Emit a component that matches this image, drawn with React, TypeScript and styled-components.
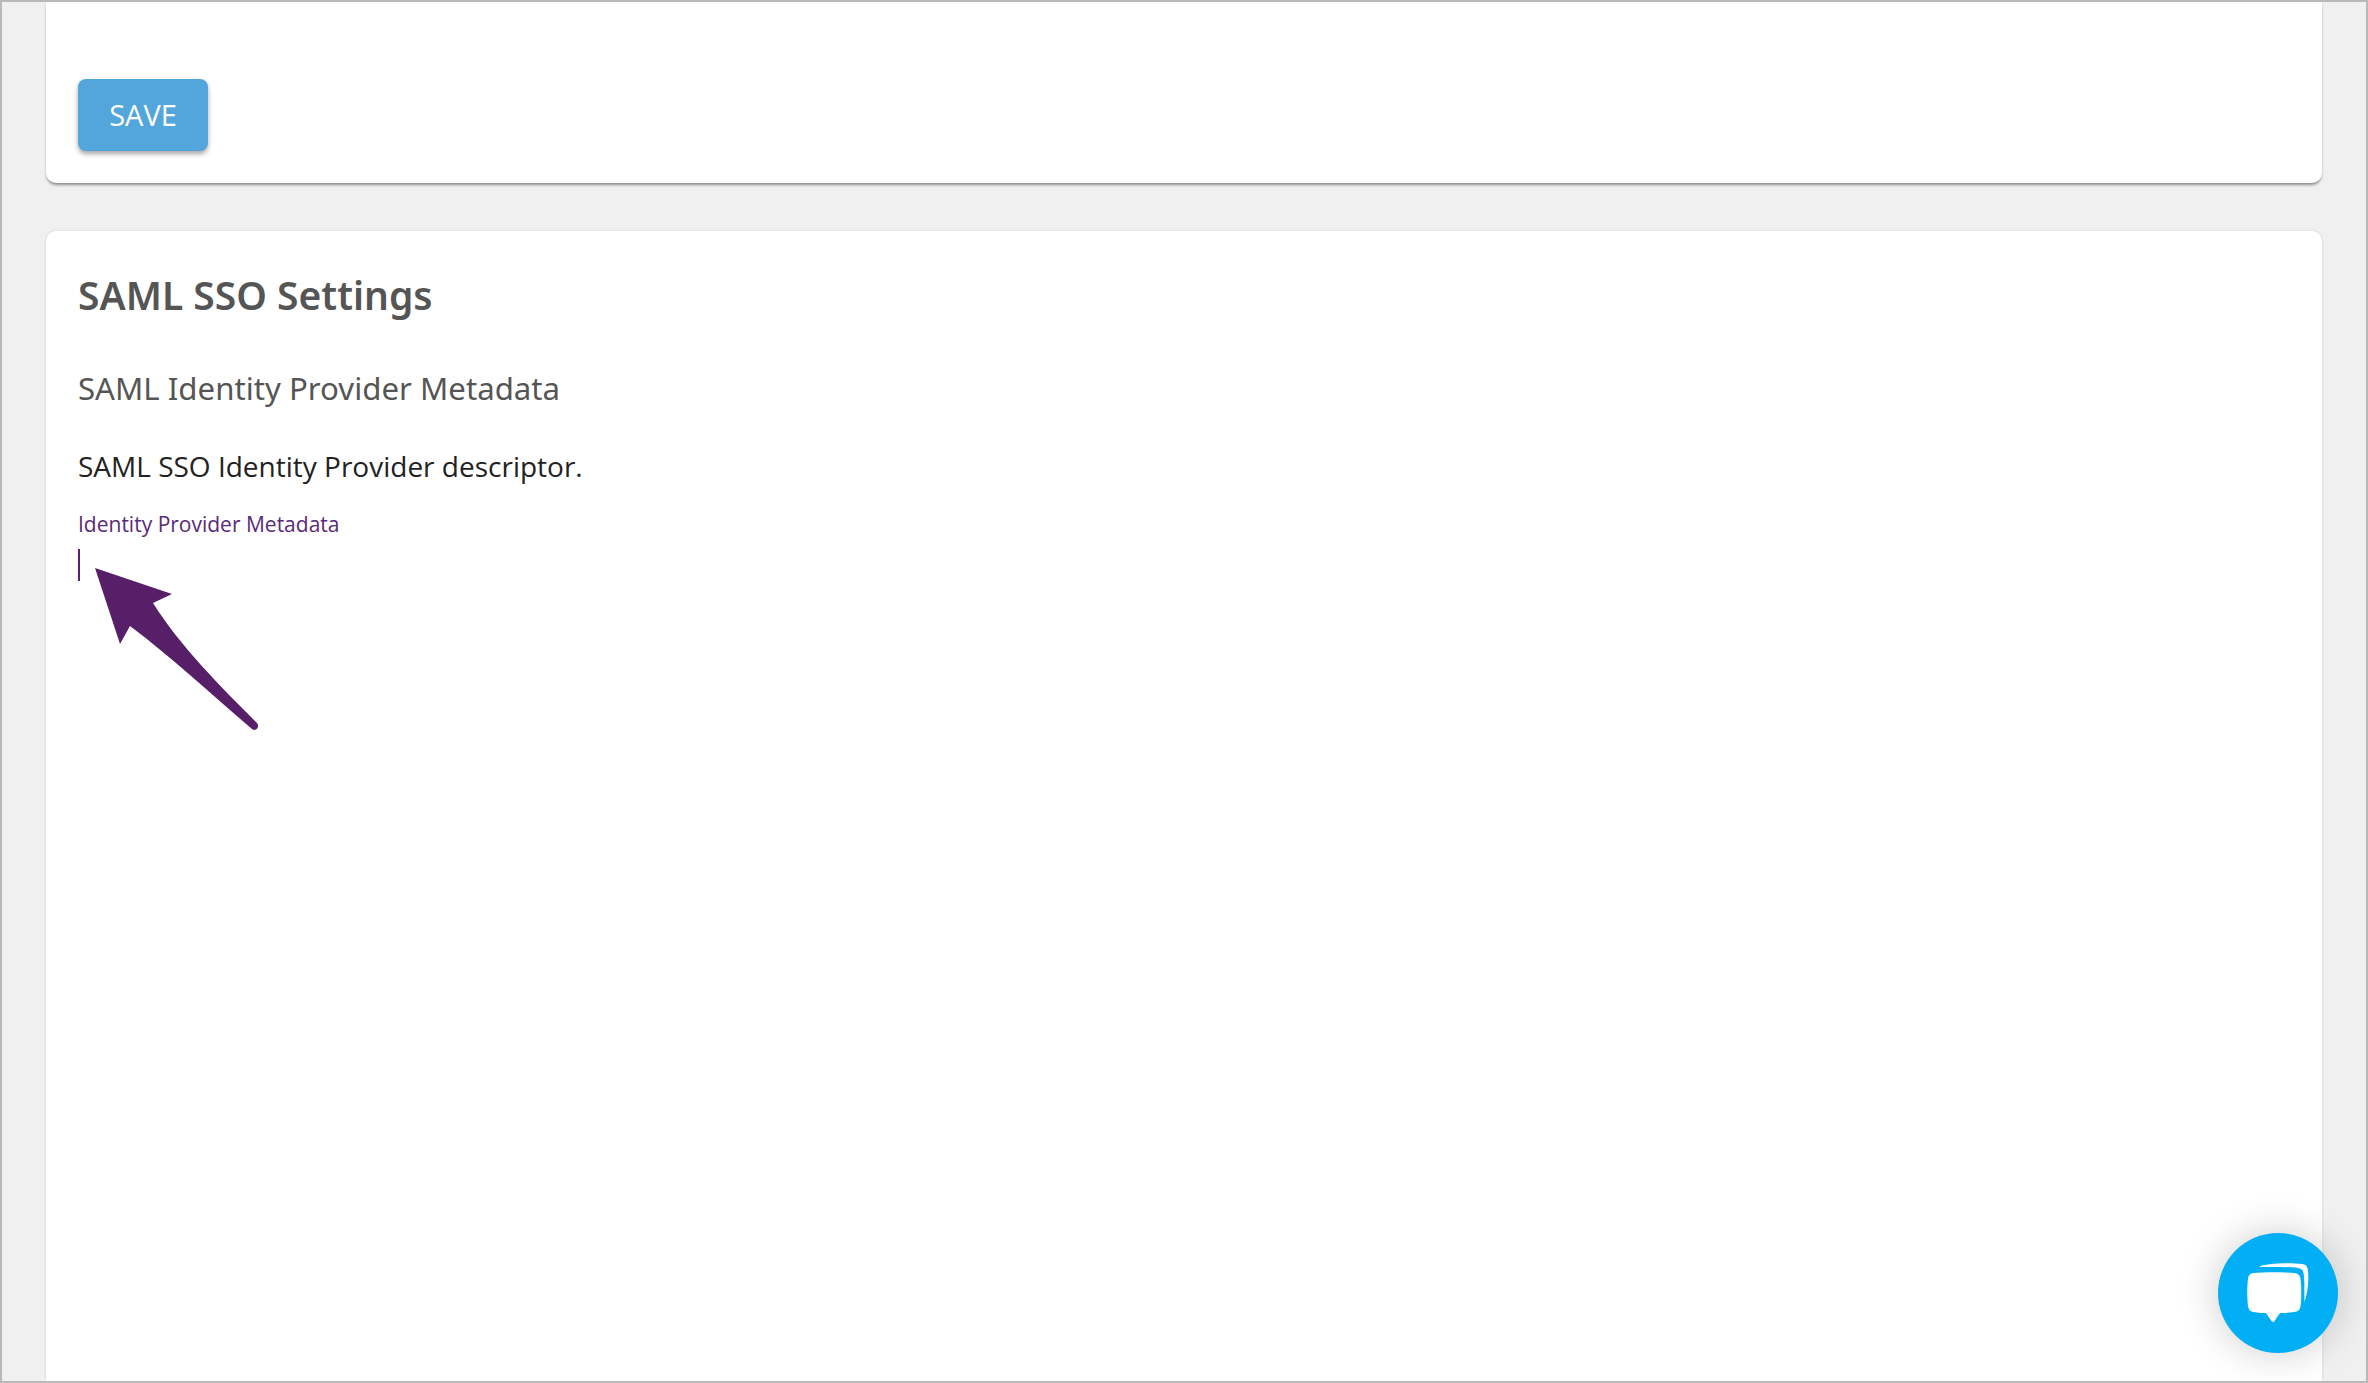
import React from "react";
import styled, { createGlobalStyle } from "styled-components";

const GlobalStyle = createGlobalStyle`
  html, body {
    margin: 0;
    padding: 0;
    height: 100%;
    overflow: hidden;
  }
  body {
    font-family: "Open Sans", "Noto Sans", sans-serif;
  }
`;

const Frame = styled.div`
  position: relative;
  box-sizing: border-box;
  width: 2368px;
  height: 1383px;
  border: 2px solid #b9b9b9;
  background: #f0f0f0;
  overflow: hidden;
  display: flex;
  flex-direction: column;
  gap: 48px;
  padding: 0 44px;
`;

const Card = styled.section`
  position: relative;
  background: #fff;
  padding: 0 32px;
`;

const SaveCard = styled(Card)`
  height: 181px;
  flex: none;
  padding-top: 77px;
  box-sizing: border-box;
  border-radius: 0 0 10px 10px;
  box-shadow: 0 3px 3px -1px rgba(0, 0, 0, 0.4), 0 0 3px rgba(0, 0, 0, 0.1);
`;

const SettingsCard = styled(Card)`
  flex: 1;
  padding-top: 40px;
  border-radius: 10px 10px 0 0;
  box-shadow: 0 0 3px rgba(0, 0, 0, 0.12);
`;

const SaveButton = styled.button`
  display: block;
  width: 130px;
  height: 72px;
  border: 0;
  border-radius: 8px;
  background: #53a6dc;
  color: #fff;
  font-family: "Open Sans", sans-serif;
  font-size: 29px;
  box-shadow: 0 3px 5px rgba(0, 0, 0, 0.35);
  padding: 0 0 2px;
`;

const Title = styled.h2`
  margin: 0;
  font-family: "Noto Sans", sans-serif;
  font-size: 39px;
  line-height: 48px;
  font-weight: 600;
  color: #555;
`;

const Subtitle = styled.h3`
  margin: 48px 0 0;
  font-family: "Noto Sans", sans-serif;
  font-size: 31.2px;
  line-height: 42px;
  font-weight: 400;
  color: #555;
`;

const Description = styled.p`
  margin: 36px 0 0;
  font-size: 28px;
  line-height: 42px;
  color: #222;
`;

const FieldLabel = styled.label`
  display: block;
  margin-top: 22px;
  font-size: 21px;
  line-height: 30px;
  color: #5a2a78;
`;

const Caret = styled.div`
  width: 2px;
  height: 32px;
  margin-top: 10px;
  background: #561f78;
`;

const Arrow = styled.svg`
  position: absolute;
  left: 88px;
  top: 559px;
  width: 180px;
  height: 180px;
`;

const ChatBubble = styled.div`
  position: absolute;
  right: 28px;
  bottom: 28px;
  width: 120px;
  height: 120px;
  border-radius: 50%;
  background: #03aff4;
  box-shadow: 0 0 40px rgba(0, 0, 0, 0.2);
`;

const ChatIcon = styled.svg`
  display: block;
  width: 120px;
  height: 120px;
`;

const App = () => {
  return (
    <>
      <GlobalStyle />
      <Frame>
        <SaveCard>
          <SaveButton>SAVE</SaveButton>
        </SaveCard>
        <SettingsCard>
          <Title>SAML SSO Settings</Title>
          <Subtitle>SAML Identity Provider Metadata</Subtitle>
          <Description>SAML SSO Identity Provider descriptor.</Description>
          <FieldLabel>Identity Provider Metadata</FieldLabel>
          <Caret />
        </SettingsCard>
        <Arrow viewBox="90 560 180 180">
          <path
            d="M95 567 L172 593 L153 602 C180 645 220 685 257 722 C260 726 256 731 252 728 C210 692 170 655 130 625 L120 643 Z"
            fill="#561f68"
          />
        </Arrow>
        <ChatBubble>
          <ChatIcon viewBox="0 0 120 120">
            <path
              d="M41 34 C46 30.5 70 29.5 84 31 C89 31.5 89.5 34 90 38 C91 50 89.5 60 86.5 69 C86 60 87 48 85.5 40 C85 36.5 83 35.5 80 35 C68 33.5 50 34 41 34 Z"
              fill="#fff"
            />
            <path
              d="M36 40 C45 39 66 39 76 40 C80 40.5 82 42 82.5 46 C83.5 54 83.5 66 82.5 73 C82 77 80 78.5 76 79 C72 79.5 68 80 62 80 L56.5 88 C55.5 89.3 54.5 89.3 53.5 88 L48 80 C42 80 38 79.5 35 79 C32 78.5 30.5 76.5 30 73 C29 65 29 53 30 46 C30.5 42 32 40.5 36 40 Z"
              fill="#fff"
            />
          </ChatIcon>
        </ChatBubble>
      </Frame>
    </>
  );
};

export default App;
